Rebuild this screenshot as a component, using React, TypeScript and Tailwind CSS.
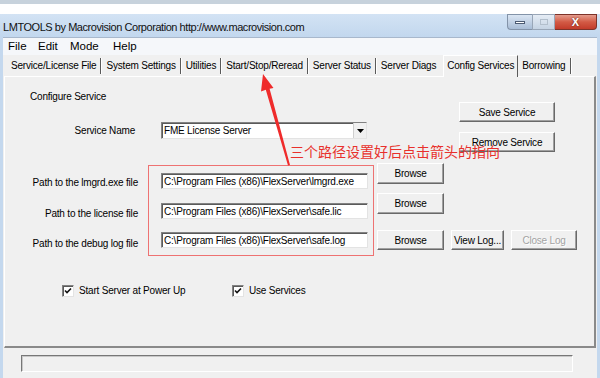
import React from 'react';

const ui = "font-['Liberation_Sans',Arial,sans-serif]";

type BtnProps = { label: string; className: string; disabled?: boolean };

const Btn = ({ label, className, disabled }: BtnProps) => (
  <div
    className={`${className} flex items-center justify-center bg-[#f0f0f0] border border-t-white border-l-white border-r-[#696969] border-b-[#696969] shadow-[inset_-1px_-1px_0_#a0a0a0] text-[10px] tracking-[-0.2px] ${
      disabled ? 'text-[#a3a3a3] [text-shadow:1px_1px_0_#fff]' : 'text-black'
    }`}
  >
    {label}
  </div>
);

const Field = ({ value, className }: { value: string; className: string }) => (
  <div
    className={`${className} h-[16px] flex items-center pl-[2px] bg-white border border-t-[#828282] border-l-[#828282] border-r-[#e3e3e3] border-b-[#e3e3e3] shadow-[inset_1px_1px_0_#5a5a5a] text-[10px] tracking-[-0.2px] whitespace-nowrap overflow-hidden`}
  >
    {value}
  </div>
);

const Check = ({ label, className }: { label: string; className: string }) => (
  <div className={`${className} flex items-center`}>
    <div className="w-[12px] h-[12px] bg-white border border-t-[#828282] border-l-[#828282] border-r-[#e3e3e3] border-b-[#e3e3e3] shadow-[inset_1px_1px_0_#5a5a5a] flex items-center justify-center">
      <svg width="8" height="8" viewBox="0 0 8 8">
        <path d="M1 3.5 L3 5.5 L7 1.5" stroke="#111" strokeWidth="1.6" fill="none" />
      </svg>
    </div>
    <span className="ml-[5px] text-[10px] tracking-[-0.2px]">{label}</span>
  </div>
);

const Sep = () => <div className="w-[2px] h-[16px] border-l border-l-[#5a5a5a] border-r border-r-white" />;

const tabs = ['Service/License File', 'System Settings', 'Utilities', 'Start/Stop/Reread', 'Server Status'];

export default function App() {
  return (
    <div className={`${ui} relative w-[600px] h-[378px] overflow-hidden bg-[#f0f0f0] flex flex-col text-black`}>
      <div className="h-[4px] bg-[#c7d2dc]" />
      <div className="h-[10px] bg-white" />

      {/* window */}
      <div className="flex-1 flex flex-col bg-[#c4d8ee] px-[3px]">
        {/* title bar */}
        <div className="h-[23px] -mx-[3px] flex items-start justify-between bg-linear-to-b from-[#d3e3f4] to-[#c2d7ee]">
          <div className="pl-[3px] pt-[5px] text-[11px] tracking-[-0.45px] text-[#111]">
            LMTOOLS by Macrovision Corporation http://www.macrovision.com
          </div>
          <div className="flex mr-[3px] h-[16px]">
            <div className="w-[25px] rounded-bl-[4px] border border-[#8393a8] border-r-0 bg-linear-to-b from-[#dbe6f3] to-[#a9bdd6] flex items-center justify-center">
              <div className="w-[10px] h-[3px] bg-white border border-[#4c5b72]" />
            </div>
            <div className="w-[23px] border border-[#99a6b7] bg-linear-to-b from-[#e6edf5] to-[#c5d3e3] flex items-center justify-center">
              <div className="w-[8px] h-[6px] border border-[#b3bfcc]" />
            </div>
            <div className="w-[42px] rounded-br-[4px] border border-[#7d3329] border-l-0 bg-linear-to-b from-[#e49c8d] via-[#d35a45] to-[#c23b2a] flex items-center justify-center">
              <span className="text-white font-bold text-[11px] leading-none [text-shadow:0_0_2px_#501a10]">X</span>
            </div>
          </div>
        </div>

        {/* client */}
        <div className="flex-1 flex flex-col bg-[#f0f0f0]">
          <div className="h-[18px] flex items-center pl-[5px] text-[11.5px] bg-[#f5f7fa] border-t border-t-[#a8b8cc]">
            <span className="w-[30px]">File</span>
            <span className="w-[32px]">Edit</span>
            <span className="w-[43px]">Mode</span>
            <span>Help</span>
          </div>

          {/* tabs */}
          <div className="h-[21px] flex items-end pl-[4px] text-[10px] tracking-[-0.2px]">
            {tabs.map((t) => (
              <div key={t} className="flex items-center h-[19px] pb-[2px]">
                <span className="px-[4px]">{t}</span>
                <Sep />
              </div>
            ))}
            <div className="flex items-center h-[19px] pb-[2px]">
              <span className="px-[4px]">Server Diags</span>
            </div>
            <div className="relative z-10 -mb-[1px] h-[22px] ml-[3px] px-[3px] flex items-center pb-[3px] bg-[#f0f0f0] border-t border-l border-t-white border-l-white border-r border-r-[#5a5a5a]">
              Config Services
            </div>
            <div className="flex items-center h-[19px] pb-[2px]">
              <span className="px-[4px]">Borrowing</span>
              <Sep />
            </div>
          </div>

          {/* panel */}
          <div className="mx-[1px] h-[272px] border-t border-l border-t-white border-l-white border-r-2 border-b-2 border-r-[#8a8a8a] border-b-[#8a8a8a] flex flex-col text-[10px] tracking-[-0.2px]">
            <div className="flex">
              <div className="w-[454px] flex flex-col">
                <div className="pl-[25px] mt-[14px] leading-[12px]">Configure Service</div>
                <div className="flex items-center mt-[19px]">
                  <div className="w-[130px] text-right">Service Name</div>
                  <div className="ml-[26px] w-[206px] h-[17px] flex items-center bg-white border border-t-[#828282] border-l-[#828282] border-r-[#e3e3e3] border-b-[#e3e3e3] shadow-[inset_1px_1px_0_#5a5a5a]">
                    <span className="flex-1 pl-[2px]">FME License Server</span>
                    <div className="w-[13px] h-full flex items-center justify-center bg-[#f0f0f0] border-l border-l-[#cfcfcf]">
                      <svg width="7" height="4" viewBox="0 0 7 4">
                        <path d="M0 0 H7 L3.5 4 Z" fill="#000" />
                      </svg>
                    </div>
                  </div>
                </div>
              </div>
              <div className="flex flex-col gap-[10px] mt-[25px]">
                <Btn label="Save Service" className="w-[96px] h-[20px]" />
                <Btn label="Remove Service" className="w-[96px] h-[20px]" />
              </div>
            </div>

            {/* path rows */}
            <div className="flex items-start mt-[11px]">
              <div className="w-[133px] mt-[14px] leading-[12px] text-right">Path to the lmgrd.exe file</div>
              <Field value="C:\Program Files (x86)\FlexServer\lmgrd.exe" className="ml-[23px] mt-[10px] w-[207px]" />
              <Btn label="Browse" className="ml-[9px] w-[67px] h-[21px]" />
            </div>
            <div className="flex items-start mt-[4px]">
              <div className="w-[133px] mt-[15px] leading-[12px] text-right">Path to the license file</div>
              <Field value="C:\Program Files (x86)\FlexServer\safe.lic" className="ml-[23px] mt-[10px] w-[207px]" />
              <Btn label="Browse" className="ml-[9px] w-[67px] h-[21px]" />
            </div>
            <div className="flex items-start mt-[10px]">
              <div className="w-[133px] mt-[8px] leading-[12px] text-right">Path to the debug log file</div>
              <Field value="C:\Program Files (x86)\FlexServer\safe.log" className="ml-[23px] mt-[2px] w-[207px]" />
              <Btn label="Browse" className="ml-[9px] w-[67px] h-[20px]" />
              <Btn label="View Log..." className="ml-[7px] w-[53px] h-[20px]" />
              <Btn label="Close Log" className="ml-[7px] w-[66px] h-[20px]" disabled />
            </div>

            <div className="flex items-center mt-[33px] pl-[57px]">
              <Check label="Start Server at Power Up" className="w-[170px]" />
              <Check label="Use Services" className="" />
            </div>
          </div>

          {/* status bar */}
          <div className="ml-[18px] mt-[7px] w-[552px] h-[17px] border border-t-[#777] border-l-[#777] border-r-white border-b-white shadow-[inset_1px_1px_0_#c8c8c8]" />
        </div>
      </div>

      {/* annotation overlay */}
      <div className="absolute left-[148px] top-[165px] w-[226px] h-[91px] border-[1.5px] border-[#ee7272]" />
      <div className="absolute left-[290px] top-[142px] text-[14px] leading-[18px] text-[#e8302c] font-['Noto_Sans_CJK_SC',sans-serif] whitespace-nowrap">
        三个路径设置好后点击箭头的指向
      </div>
      <svg className="absolute left-0 top-0 pointer-events-none" width="600" height="378" viewBox="0 0 600 378">
        <polygon
          points="263,74 273.5,88 269.6,88.8 290,165 288,165.5 265.8,89.8 261,91.5"
          fill="#ef2b2b"
        />
      </svg>
    </div>
  );
}
